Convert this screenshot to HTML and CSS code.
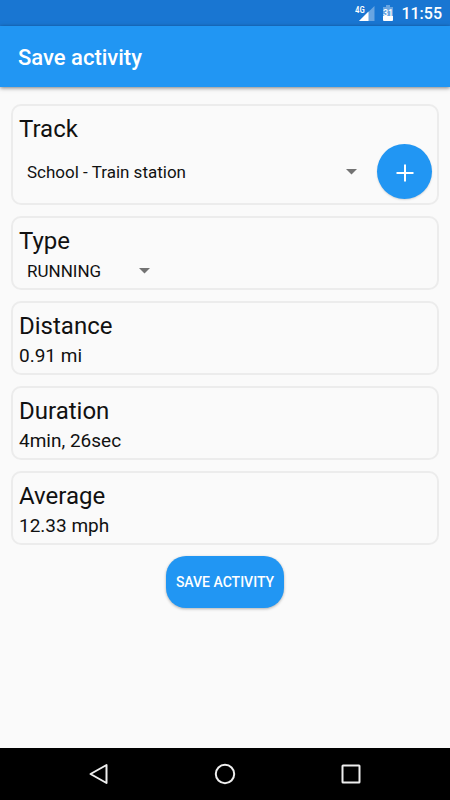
FILE: index.html
```html
<!DOCTYPE html>
<html lang="en">
<head>
<meta charset="utf-8">
<meta name="viewport" content="width=device-width, initial-scale=1">
<title>Save activity</title>
<link rel="stylesheet" href="styles.css">
</head>
<body>
<div class="status">
  <svg class="signal" width="20" height="16" viewBox="0 0 20 16" aria-hidden="true">
    <path d="M19.500 1v15H4z" fill="#fff" fill-opacity=".35"/>
    <path d="M13.500 6.500V16H4z" fill="#fff"/>
    <path d="M0 0h12v6.500L8.500 9H0z" fill="#1976d2"/>
    <text class="network" x="0" y="8">4G</text>
  </svg>
  <svg class="battery" width="10" height="16" viewBox="0 0 10 16" aria-hidden="true">
    <path d="M3 0h4v2h3v9H0V2h3z" fill="#fff" fill-opacity=".35"/>
    <path d="M0 11h10v4q0 1-1 1H1q-1 0-1-1z" fill="#fff"/>
    <text class="level" x="5" y="11" text-anchor="middle">31</text>
  </svg>
  <span class="clock">11:55</span>
</div>
<header class="appbar"><h1>Save activity</h1></header>
<main>
  <form class="form">
    <section class="card">
      <label class="title" for="track">Track</label>
      <div class="row">
        <div class="spinner wide">
          <select id="track"><option>School - Train station</option></select>
          <svg class="arrow" width="11" height="6" viewBox="0 0 11 6" aria-hidden="true"><path d="M0 0h11L5.500 5.500z"/></svg>
        </div>
        <button class="add" type="button" aria-label="Add track">
          <svg width="18" height="18" viewBox="0 0 18 18" aria-hidden="true"><path d="M9 0.500v17M0.500 9h17"/></svg>
        </button>
      </div>
    </section>
    <section class="card">
      <label class="title" for="type">Type</label>
      <div class="spinner">
        <select id="type"><option>RUNNING</option></select>
        <svg class="arrow" width="11" height="6" viewBox="0 0 11 6" aria-hidden="true"><path d="M0 0h11L5.500 5.500z"/></svg>
      </div>
    </section>
    <section class="card">
      <h2 class="title">Distance</h2>
      <p class="value">0.91 mi</p>
    </section>
    <section class="card">
      <h2 class="title">Duration</h2>
      <p class="value">4min, 26sec</p>
    </section>
    <section class="card">
      <h2 class="title">Average</h2>
      <p class="value">12.33 mph</p>
    </section>
    <button class="save" type="submit">SAVE ACTIVITY</button>
  </form>
</main>
<nav class="navbar">
  <button type="button" aria-label="Back"><svg width="22" height="22" viewBox="0 0 22 22"><path d="M18.500 2v18L2.500 11z"/></svg></button>
  <button type="button" aria-label="Home"><svg width="22" height="22" viewBox="0 0 22 22"><circle cx="11" cy="11" r="9.200"/></svg></button>
  <button type="button" aria-label="Recent apps"><svg width="22" height="22" viewBox="0 0 22 22"><rect x="2.500" y="2.500" width="17" height="17" rx=".5"/></svg></button>
</nav>
</body>
</html>
```
FILE: styles.css
```css
* {
  box-sizing: border-box;
}

body {
  margin: 0;
  min-height: 100vh;
  display: flex;
  flex-direction: column;
  background: #fafafa;
  color: #111;
  font-family: Roboto, sans-serif;
}

h1, h2, p {
  margin: 0;
}

button, select {
  border: 0;
  padding: 0;
  color: inherit;
  font-family: inherit;
}

svg {
  display: block;
}

.status {
  height: 26px;
  padding-right: 8px;
  display: flex;
  align-items: center;
  justify-content: flex-end;
  gap: 8px;
  background: #1976d2;
  color: #fff;
}

.network,
.level {
  fill: #fff;
  font-size: 9px;
  font-weight: 500;
}

.network {
  font-family: "Roboto Condensed", Roboto, sans-serif;
}

.clock {
  padding-top: 2px;
  font-size: 16px;
  font-weight: 500;
  line-height: 24px;
}

.appbar {
  height: 61px;
  padding: 3px 18px 0;
  display: flex;
  align-items: center;
  background: #2196f3;
  box-shadow: 0 1px 4px rgba(0, 0, 0, .5);
  color: #fff;
}

.appbar h1 {
  font-size: 22px;
  font-weight: 500;
  line-height: 28px;
}

main {
  flex: 1;
}

.form {
  padding: 17px 11px;
  display: flex;
  flex-direction: column;
  gap: 11px;
}

.card {
  padding: 8px 6px 2px;
  border: 2px solid #ececec;
  border-radius: 10px;
}

.title {
  display: block;
  font-size: 24px;
  font-weight: 400;
  line-height: 30px;
}

.value {
  font-size: 19px;
  line-height: 30px;
}

.row {
  display: flex;
  align-items: center;
  gap: 20px;
  margin: 0 -1px 2px 0;
}

.spinner {
  display: grid;
  align-items: center;
  width: 131px;
}

.spinner > * {
  grid-area: 1 / 1;
}

.spinner.wide {
  flex: 1;
}

.spinner select {
  appearance: none;
  width: 100%;
  height: 30px;
  padding: 0 24px 0 8px;
  background: transparent;
  font-size: 17px;
}

.arrow {
  justify-self: end;
  fill: #737373;
  pointer-events: none;
}

.add {
  width: 55px;
  height: 55px;
  padding-top: 3px;
  display: grid;
  place-items: center;
  border-radius: 50%;
  background: #2196f3;
  box-shadow: 0 1px 2px rgba(0, 0, 0, .15);
}

.add svg {
  fill: none;
  stroke: #fff;
  stroke-width: 2;
}

.save {
  align-self: center;
  padding: 0 10px;
  height: 52px;
  border-radius: 20px;
  background: #2196f3;
  box-shadow: 0 1px 3px rgba(0, 0, 0, .3);
  color: #fff;
  font-size: 14px;
  font-weight: 500;
}

.navbar {
  height: 52px;
  display: flex;
  align-items: center;
  justify-content: center;
  background: #000;
}

.navbar button {
  flex: 0 0 28%;
  display: grid;
  place-items: center;
  height: 52px;
  background: transparent;
}

.navbar svg {
  fill: none;
  stroke: #eee;
  stroke-width: 2;
  stroke-linejoin: round;
}
```
